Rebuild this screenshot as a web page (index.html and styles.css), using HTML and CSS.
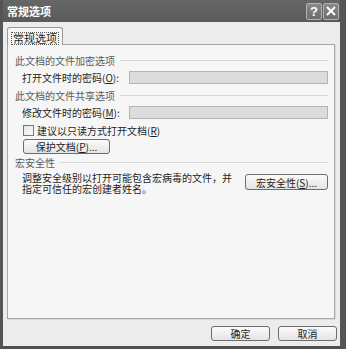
FILE: index.html
```html
<!DOCTYPE html>
<html lang="zh-CN">

<head>
    <meta charset="utf-8">
    <title>常规选项</title>
    <link rel="stylesheet" href="styles.css">
</head>

<body>
    <div class="vindue">
        <div class="titel">
            <span class="titeltekst">常规选项</span>
            <div class="titelknapper">
                <span class="tknap">?</span>
                <span class="tknap">
                    <svg width="10" height="10" viewBox="0 0 10 10">
                        <path d="M1 1 L9 9 M9 1 L1 9" stroke="#fff" stroke-width="2" fill="none"/>
                    </svg>
                </span>
            </div>
        </div>

        <div class="klient">
            <div class="faner">
                <div class="fane"><span class="fokus">常规选项</span></div>
            </div>

            <div class="panel">
                <div class="overskrift"><span>此文档的文件加密选项</span><i></i></div>
                <div class="raekke">
                    <span class="etiket">打开文件时的密码(<u>O</u>):</span>
                    <span class="felt"></span>
                </div>

                <div class="overskrift"><span>此文档的文件共享选项</span><i></i></div>
                <div class="raekke">
                    <span class="etiket">修改文件时的密码(<u>M</u>):</span>
                    <span class="felt"></span>
                </div>

                <div class="tjek">
                    <span class="boks"></span>
                    <span>建议以只读方式打开文档(<u>R</u>)</span>
                </div>
                <div class="beskyt">
                    <button class="knap bred">保护文档(<u>P</u>)...</button>
                </div>

                <div class="overskrift makro"><span>宏安全性</span><i></i></div>
                <div class="makrorad">
                    <div class="tekst">
                        <div class="linje">调整安全级别以打开可能包含宏病毒的文件，并</div>
                        <div class="linje">指定可信任的宏创建者姓名。</div>
                    </div>
                    <button class="knap makroknap">宏安全性(<u>S</u>)...</button>
                </div>
            </div>

            <div class="bund">
                <button class="knap ok">确定</button>
                <button class="knap ok">取消</button>
            </div>
        </div>
    </div>
</body>

</html>
```

FILE: styles.css
```css
body {
    margin: 0;
    background-color: #5b5b5b;
    font-family: "Noto Sans CJK SC", "Liberation Sans", sans-serif;
    font-size: 10px;
    color: #1e1e1e;
}

.vindue {
    width: 346px;
    height: 349px;
    box-sizing: border-box;
    background-color: #5b5b5b;
    border-left: 3px solid #555;
    border-right: 6px solid #555;
    border-bottom: 3px solid #505050;
    display: flex;
    flex-direction: column;
}

.titel {
    height: 22px;
    display: flex;
    align-items: center;
    justify-content: space-between;
    padding-left: 4px;
    padding-right: 1px;
    background: linear-gradient(#666, #5a5a5a);
}

.titeltekst {
    color: #fff;
    font-size: 11px;
    font-weight: bold;
    line-height: 12px;
}

.titelknapper {
    display: flex;
    gap: 1px;
}

.tknap {
    width: 16px;
    height: 17px;
    box-sizing: border-box;
    border: 1px solid #b0b0b0;
    border-radius: 2px;
    background: linear-gradient(#8a8a8a, #6c6c6c);
    color: #fff;
    font-family: "Liberation Sans", sans-serif;
    font-weight: bold;
    font-size: 13px;
    display: flex;
    align-items: center;
    justify-content: center;
}

.klient {
    flex: 1;
    background-color: #ececec;
    padding: 5px 3px 0 4px;
}

.faner {
    display: flex;
    height: 17px;
}

.fane {
    width: 56px;
    box-sizing: border-box;
    border: 1px solid #9a9a9a;
    border-bottom: none;
    border-radius: 3px 3px 0 0;
    background-color: #f6f6f6;
    height: 18px;
    position: relative;
    z-index: 1;
    display: flex;
    justify-content: center;
    padding-top: 4px;
}

.fokus {
    font-size: 11px;
    line-height: 11px;
    height: 11px;
    padding: 0 1px;
    border: 1px dotted #555;
}

.panel {
    height: 275px;
    width: 328px;
    box-sizing: border-box;
    border: 1px solid #a8a8a8;
    background-color: #f6f6f6;
    padding: 9px 6px 0 7px;
    box-shadow: 1px 1px 0 #d8d8d8;
}

.overskrift {
    display: flex;
    align-items: center;
    height: 13px;
    color: #5a5a5a;
}

.overskrift i {
    flex: 1;
    border-top: 1px solid #d6d6d6;
    margin-left: 5px;
}

.raekke {
    display: flex;
    align-items: center;
    height: 13px;
    margin-top: 4px;
    margin-bottom: 5px;
    padding-left: 7px;
}

.etiket {
    width: 107px;
}

.felt {
    flex: 1;
    height: 13px;
    box-sizing: border-box;
    border: 1px solid #b4b4b4;
    background-color: #dcdcdc;
}

.tjek {
    display: flex;
    align-items: center;
    gap: 3px;
    height: 13px;
    margin-top: 2px;
    padding-left: 8px;
}

.boks {
    width: 11px;
    height: 11px;
    box-sizing: border-box;
    border: 1px solid #777;
    background: linear-gradient(135deg, #e4e4e4, #fafafa);
}

.beskyt {
    margin-top: 2px;
    padding-left: 8px;
}

.knap {
    font-family: inherit;
    font-size: 10px;
    color: #1e1e1e;
    height: 15px;
    line-height: 13px;
    padding: 0;
    box-sizing: border-box;
    border: 1px solid #6c6c6c;
    border-radius: 3px;
    background: linear-gradient(#fbfbfb, #e4e4e4);
}

.bred {
    width: 87px;
}

.makro {
    margin-top: 2px;
}

.makrorad {
    display: flex;
    justify-content: space-between;
    align-items: flex-start;
    margin-top: 4px;
    padding-left: 7px;
}

.tekst {
    display: flex;
    flex-direction: column;
}

.linje {
    height: 10px;
    line-height: 10px;
    margin-bottom: 1px;
}

.makroknap {
    width: 83px;
    height: 16px;
    margin-top: 1px;
}

.bund {
    display: flex;
    justify-content: flex-end;
    gap: 8px;
    margin-top: 7px;
}

.ok {
    width: 59px;
}
```
